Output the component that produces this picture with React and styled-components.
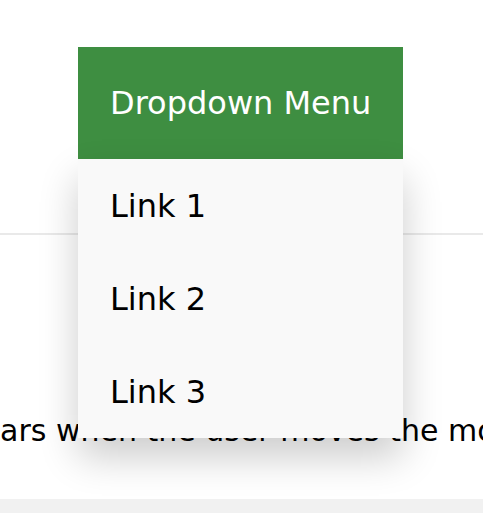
import styled, { createGlobalStyle } from "styled-components"

const GlobalStyle = createGlobalStyle`
    html, body {
        margin: 0;
        padding: 0;
        background: #ffffff;
        font-family: "DejaVu Sans", Verdana, sans-serif;
        overflow: hidden;
    }
`
const Pagina = styled.div`
    display: flex;
    flex-direction: column;
    width: 483px;
    height: 513px;
    overflow: hidden;
`
const Topo = styled.header`
    height: 233px;
    padding: 47px 0 0 78px;
    box-sizing: border-box;
`
const Dropdown = styled.div`
    position: relative;
    display: inline-block;
    width: 325px;
`
const BotaoMenu = styled.button`
    display: block;
    width: 100%;
    background-color: #3e8e41;
    color: #ffffff;
    font-family: inherit;
    font-size: 32px;
    text-align: left;
    padding: 37px 31px 37px 32px;
    border: none;
    cursor: pointer;
`
const Conteudo = styled.div`
    position: absolute;
    top: 100%;
    left: 0;
    width: 100%;
    background-color: #f9f9f9;
    box-shadow: 0 19px 37px 0 rgba(0, 0, 0, 0.2);
    z-index: 1;
`
const Link = styled.a`
    display: block;
    color: #000000;
    font-size: 32px;
    padding: 28px 32px 27px;
    text-decoration: none;
`
const Divisor = styled.hr`
    margin: 0;
    border: none;
    height: 2px;
    background-color: #e9e9e9;
`
const Texto = styled.p`
    margin: 178px 0 0;
    font-size: 30px;
    white-space: nowrap;
    color: #000000;
`
const Rodape = styled.footer`
    margin-top: auto;
    height: 14px;
    background-color: #f1f1f1;
`

const App = () => {
    return (
        <Pagina>
            <GlobalStyle />
            <Topo>
                <Dropdown>
                    <BotaoMenu>Dropdown Menu</BotaoMenu>
                    <Conteudo>
                        <Link href="#">Link 1</Link>
                        <Link href="#">Link 2</Link>
                        <Link href="#">Link 3</Link>
                    </Conteudo>
                </Dropdown>
            </Topo>
            <Divisor />
            <Texto>ars when the user moves the mouse over the button.</Texto>
            <Rodape />
        </Pagina>
    )
}

export default App
